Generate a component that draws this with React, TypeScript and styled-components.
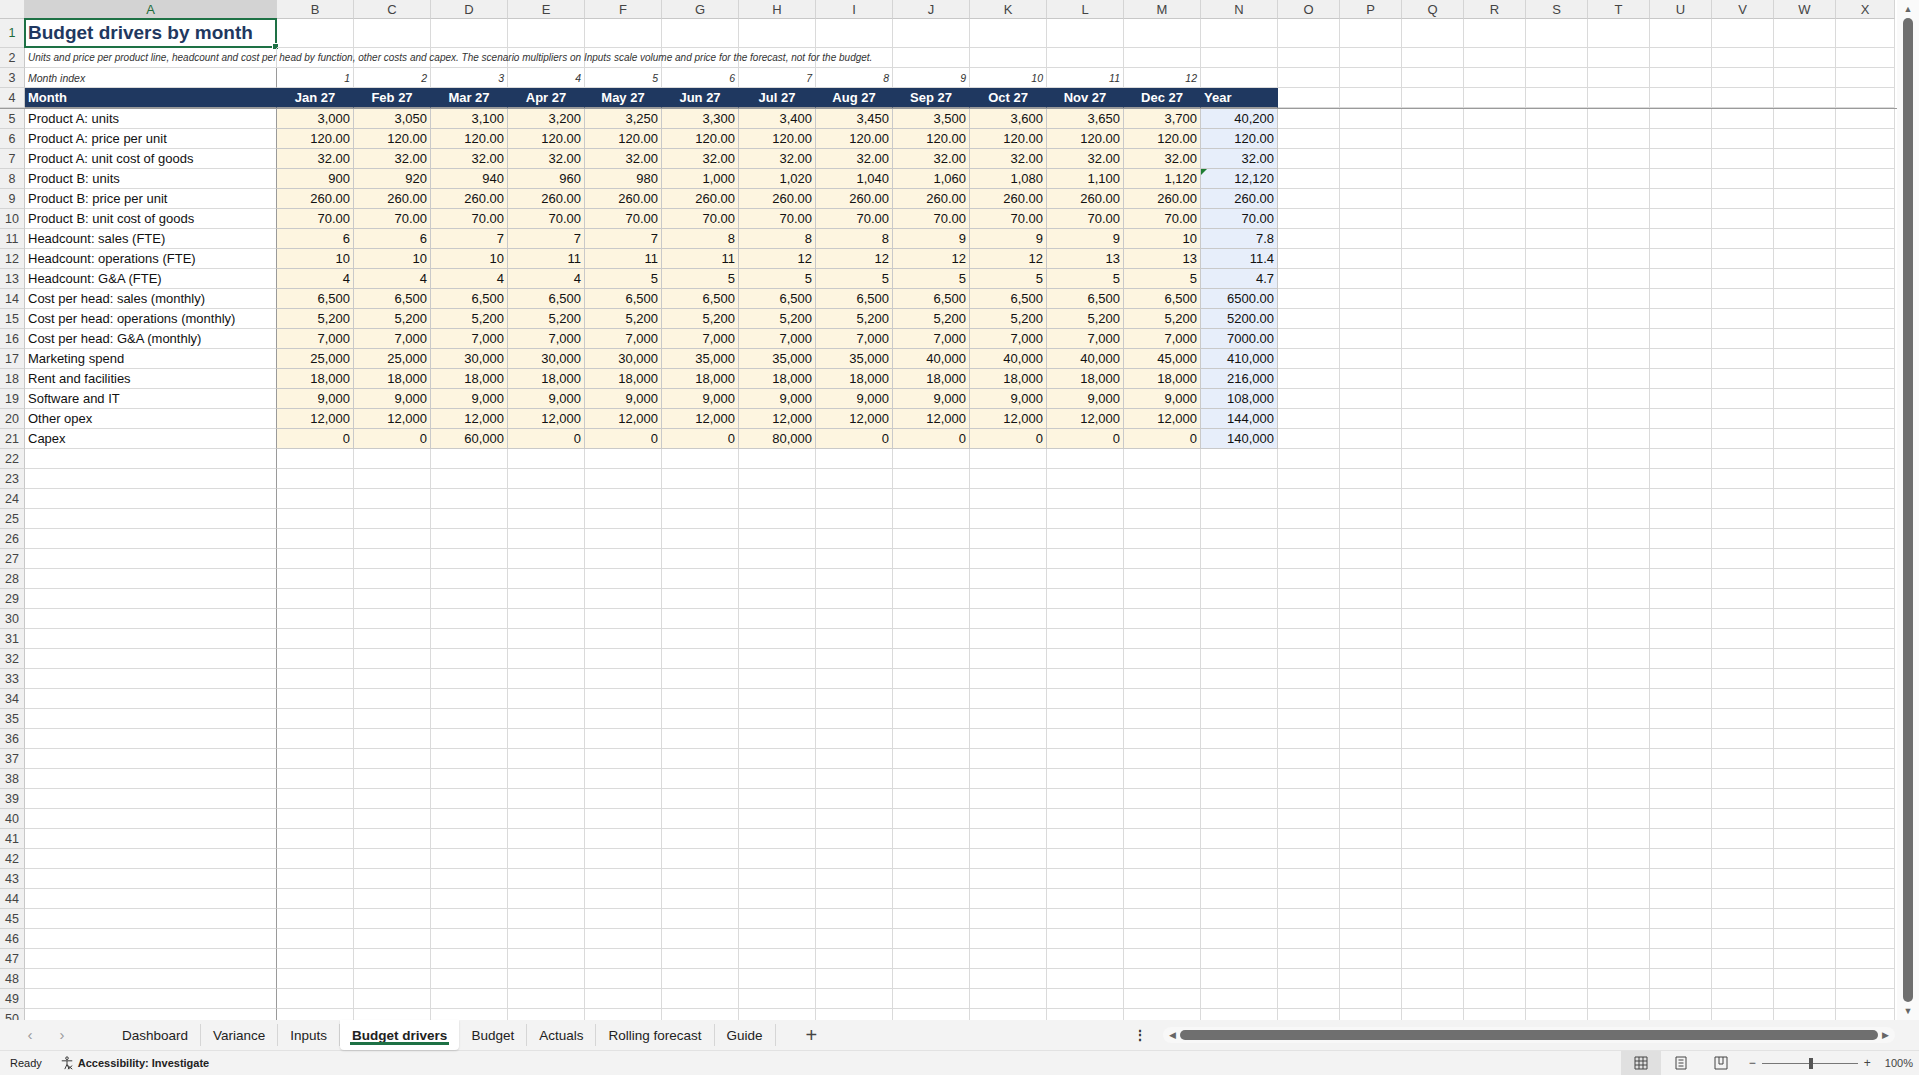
import React from "react";
import styled, { createGlobalStyle, css } from "styled-components";

const Global = createGlobalStyle`
  html,body{margin:0;padding:0;overflow:hidden;background:#fff;}
  body{font-family:"Liberation Sans","Noto Sans",sans-serif;}
`;

const COLS = ["A","B","C","D","E","F","G","H","I","J","K","L","M","N","O","P","Q","R","S","T","U","V","W","X"];
const widthOf = (i: number) => (i === 0 ? 252 : i <= 13 ? 77 : i === 23 ? 59 : 62);
const TEMPLATE = `25px ${COLS.map((_, i) => widthOf(i) + "px").join(" ")}`;

const Page = styled.div`width:1919px;height:1075px;display:flex;flex-direction:column;background:#fff;`;
const Main = styled.div`flex:1;display:flex;min-height:0;`;
const Sheet = styled.div`flex:1;overflow:hidden;`;
const Row = styled.div<{ $h: number; $freeze?: boolean }>`
  display:grid;grid-template-columns:${TEMPLATE};height:${p => p.$h}px;
  ${p => p.$freeze && css`border-bottom:1px solid #9a9a9a;`}
`;
const ColHead = styled.div<{ $sel?: boolean }>`
  background:${p => (p.$sel ? "#d3d3d3" : "#f0f0f0")};color:${p => (p.$sel ? "#1d6b3a" : "#444")};
  border-right:1px solid #d4d4d4;border-bottom:1px solid ${p => (p.$sel ? "#1d7a45" : "#c8c8c8")};
  font-size:13px;display:flex;align-items:center;justify-content:center;box-sizing:border-box;
`;
const RowHead = styled.div<{ $sel?: boolean }>`
  background:#f0f0f0;color:${p => (p.$sel ? "#1d6b3a" : "#444")};border-bottom:1px solid #d4d4d4;
  border-right:1px solid #c8c8c8;font-size:12.5px;display:flex;align-items:center;justify-content:center;box-sizing:border-box;
`;
type Kind = "plain" | "head" | "input" | "year" | "title" | "note" | "idx";
const Cell = styled.div<{ $k: Kind; $align?: string; $freezeR?: boolean }>`
  box-sizing:border-box;border-right:1px solid ${p => (p.$freezeR ? "#9a9a9a" : "#dadada")};border-bottom:1px solid #dadada;
  display:flex;align-items:center;justify-content:${p => p.$align || "flex-start"};
  padding:0 3px;font-size:13px;color:#111;white-space:nowrap;overflow:visible;position:relative;
  ${p => p.$k === "head" && css`background:#1f3860;color:#fff;font-weight:700;border-color:#1f3860;border-bottom-color:#9a9a9a;`}
  ${p => p.$k === "input" && css`background:#fdf5e0;border-right-color:#c9c9c9;border-bottom-color:#c9c9c9;`}
  ${p => p.$k === "year" && css`background:#e7eefa;border-right-color:#c9c9c9;border-bottom-color:#c9c9c9;`}
  ${p => p.$k === "title" && css`font-size:19px;font-weight:700;color:#1f3860;`}
  ${p => p.$k === "note" && css`font-size:10px;font-style:italic;color:#333;overflow:visible;z-index:2;`}
  ${p => p.$k === "idx" && css`font-size:10.5px;font-style:italic;color:#333;`}
`;
const Selected = styled.div`
  position:absolute;inset:-1px -1px -1px -1px;border:2px solid #1e7145;pointer-events:none;
  &::after{content:"";position:absolute;right:-4px;bottom:-4px;width:5px;height:5px;background:#1e7145;border:1px solid #fff;}
`;
const Tri = styled.div`position:absolute;left:0;top:0;width:0;height:0;border-top:6px solid #1e7d32;border-right:6px solid transparent;`;
const VScroll = styled.div`width:22px;background:#fafafa;display:flex;flex-direction:column;align-items:center;padding:4px 0;box-sizing:border-box;`;
const VThumb = styled.div`flex:1;width:10px;background:#6f6f6f;border-radius:5px;margin:4px 0;`;
const Arrow = styled.div`font-size:9px;color:#666;line-height:10px;`;

const TabBar = styled.div`height:30px;background:#f3f3f3;display:flex;align-items:center;font-size:13.5px;color:#222;`;
const Nav = styled.div`width:32px;text-align:center;color:#999;font-size:15px;line-height:20px;`;
const Tab = styled.div<{ $active?: boolean }>`
  padding:0 12px;height:22px;display:flex;align-items:center;position:relative;border-right:1px solid #d6d6d6;
  ${p => p.$active && css`background:#fff;font-weight:700;height:30px;border-radius:0 0 4px 4px;box-shadow:0 1px 2px rgba(0,0,0,.15);border-right:none;
    &::after{content:"";position:absolute;left:10px;right:10px;bottom:5px;height:3px;background:#1e7145;}`}
`;
const Plus = styled.div`margin-left:30px;font-size:20px;color:#444;font-weight:300;`;
const HScrollWrap = styled.div`margin-left:auto;display:flex;align-items:center;gap:16px;margin-right:24px;`;
const HTrack = styled.div`width:720px;height:16px;background:#f8f8f8;border-radius:8px;display:flex;align-items:center;padding:0 6px;gap:4px;`;
const HThumb = styled.div`flex:1;height:10px;background:#6f6f6f;border-radius:5px;`;
const Status = styled.div`height:24px;background:#f3f3f3;border-top:1px solid #e2e2e2;display:flex;align-items:center;font-size:11px;color:#222;padding-left:10px;`;
const Acc = styled.div`margin-left:18px;display:flex;align-items:center;gap:4px;font-weight:600;`;
const Right = styled.div`margin-left:auto;display:flex;align-items:center;height:100%;`;
const ViewBtn = styled.div<{ $on?: boolean }>`width:40px;height:100%;display:flex;align-items:center;justify-content:center;background:${p => (p.$on ? "#e0e0e0" : "transparent")};`;
const Zoom = styled.div`display:flex;align-items:center;gap:6px;margin-left:8px;color:#444;font-size:12px;`;
const Slider = styled.div`width:96px;height:1px;background:#777;position:relative;
  &::after{content:"";position:absolute;left:47px;top:-5px;width:4px;height:11px;background:#555;}`;

const num = (v: number) => v.toLocaleString("en-US");
const dec = (v: number) => v.toFixed(2);
const rep = (v: number) => Array(12).fill(v);
type R = [string, (number | string)[], string];
const rows: R[] = [
  ["Product A: units", [3000,3050,3100,3200,3250,3300,3400,3450,3500,3600,3650,3700].map(num), "40,200"],
  ["Product A: price per unit", rep(120).map(dec), "120.00"],
  ["Product A: unit cost of goods", rep(32).map(dec), "32.00"],
  ["Product B: units", [900,920,940,960,980,1000,1020,1040,1060,1080,1100,1120].map(num), "12,120"],
  ["Product B: price per unit", rep(260).map(dec), "260.00"],
  ["Product B: unit cost of goods", rep(70).map(dec), "70.00"],
  ["Headcount: sales (FTE)", [6,6,7,7,7,8,8,8,9,9,9,10].map(String), "7.8"],
  ["Headcount: operations (FTE)", [10,10,10,11,11,11,12,12,12,12,13,13].map(String), "11.4"],
  ["Headcount: G&A (FTE)", [4,4,4,4,5,5,5,5,5,5,5,5].map(String), "4.7"],
  ["Cost per head: sales (monthly)", rep(6500).map(num), "6500.00"],
  ["Cost per head: operations (monthly)", rep(5200).map(num), "5200.00"],
  ["Cost per head: G&A (monthly)", rep(7000).map(num), "7000.00"],
  ["Marketing spend", [25000,25000,30000,30000,30000,35000,35000,35000,40000,40000,40000,45000].map(num), "410,000"],
  ["Rent and facilities", rep(18000).map(num), "216,000"],
  ["Software and IT", rep(9000).map(num), "108,000"],
  ["Other opex", rep(12000).map(num), "144,000"],
  ["Capex", [0,0,60000,0,0,0,80000,0,0,0,0,0].map(num), "140,000"],
];
const months = ["Jan","Feb","Mar","Apr","May","Jun","Jul","Aug","Sep","Oct","Nov","Dec"].map(m => m + " 27");
const empties = (n: number) => Array.from({ length: n }, (_, i) => <Cell key={"e" + i} $k="plain" />);

export default function App() {
  const body: React.ReactNode[] = [];
  rows.forEach((r, i) => {
    const n = i + 5;
    body.push(
      <Row key={n} $h={20}>
        <RowHead>{n}</RowHead>
        <Cell $k="plain" $freezeR>{r[0]}</Cell>
        {r[1].map((v, j) => <Cell key={j} $k="input" $align="flex-end">{v}</Cell>)}
        <Cell $k="year" $align="flex-end">{n === 8 && <Tri />}{r[2]}</Cell>
        {empties(10)}
      </Row>
    );
  });
  for (let n = 22; n <= 50; n++) {
    body.push(
      <Row key={n} $h={20}>
        <RowHead>{n}</RowHead>
        <Cell $k="plain" $freezeR />
        {empties(23)}
      </Row>
    );
  }
  return (
    <Page>
      <Global />
      <Main>
        <Sheet>
          <Row $h={19}>
            <ColHead />
            {COLS.map((c, i) => <ColHead key={c} $sel={i === 0}>{c}</ColHead>)}
          </Row>
          <Row $h={29}>
            <RowHead $sel>1</RowHead>
            <Cell $k="title" $freezeR>Budget drivers by month<Selected /></Cell>
            {empties(23)}
          </Row>
          <Row $h={20}>
            <RowHead>2</RowHead>
            <Cell $k="note">Units and price per product line, headcount and cost per head by function, other costs and capex. The scenario multipliers on Inputs scale volume and price for the forecast, not for the budget.</Cell>
            {empties(23)}
          </Row>
          <Row $h={20}>
            <RowHead>3</RowHead>
            <Cell $k="idx" $freezeR>Month index</Cell>
            {months.map((_, j) => <Cell key={j} $k="idx" $align="flex-end">{j + 1}</Cell>)}
            {empties(11)}
          </Row>
          <Row $h={20} $freeze>
            <RowHead>4</RowHead>
            <Cell $k="head" $freezeR>Month</Cell>
            {months.map(m => <Cell key={m} $k="head" $align="center">{m}</Cell>)}
            <Cell $k="head">Year</Cell>
            {empties(10)}
          </Row>
          {body}
        </Sheet>
        <VScroll>
          <Arrow>▲</Arrow>
          <VThumb />
          <Arrow>▼</Arrow>
        </VScroll>
      </Main>
      <TabBar>
        <Nav style={{ marginLeft: 14 }}>‹</Nav>
        <Nav>›</Nav>
        <div style={{ width: 32 }} />
        {["Dashboard","Variance","Inputs","Budget drivers","Budget","Actuals","Rolling forecast","Guide"].map(t => (
          <Tab key={t} $active={t === "Budget drivers"}>{t}</Tab>
        ))}
        <Plus>+</Plus>
        <HScrollWrap>
          <span style={{ color: "#333", fontWeight: 700 }}>⋮</span>
          <HTrack>
            <Arrow>◀</Arrow>
            <HThumb />
            <Arrow>▶</Arrow>
          </HTrack>
        </HScrollWrap>
      </TabBar>
      <Status>
        <span>Ready</span>
        <Acc>
          <svg width="14" height="14" viewBox="0 0 16 16" fill="none" stroke="#333" strokeWidth="1.1">
            <circle cx="8" cy="2.5" r="1.5" />
            <path d="M2 5.5h12M8 5.5v4M5.5 15l2.5-5.5L10.5 15M9 11l5 4M14 11l-5 4" />
          </svg>
          Accessibility: Investigate
        </Acc>
        <Right>
          <ViewBtn $on>
            <svg width="14" height="14" viewBox="0 0 14 14" fill="none" stroke="#444"><path d="M1 1h12v12H1zM1 5h12M1 9h12M5 1v12M9 1v12" /></svg>
          </ViewBtn>
          <ViewBtn>
            <svg width="14" height="14" viewBox="0 0 14 14" fill="none" stroke="#444"><path d="M2 1h10v12H2zM4.5 4h5M4.5 7h5M4.5 10h5" /></svg>
          </ViewBtn>
          <ViewBtn>
            <svg width="14" height="14" viewBox="0 0 14 14" fill="none" stroke="#444"><path d="M1 1h12v12H1zM5 1v7h4V1" /></svg>
          </ViewBtn>
          <Zoom>
            <span>−</span>
            <Slider />
            <span>+</span>
            <span style={{ marginLeft: 8, marginRight: 6, fontSize: 11 }}>100%</span>
          </Zoom>
        </Right>
      </Status>
    </Page>
  );
}
